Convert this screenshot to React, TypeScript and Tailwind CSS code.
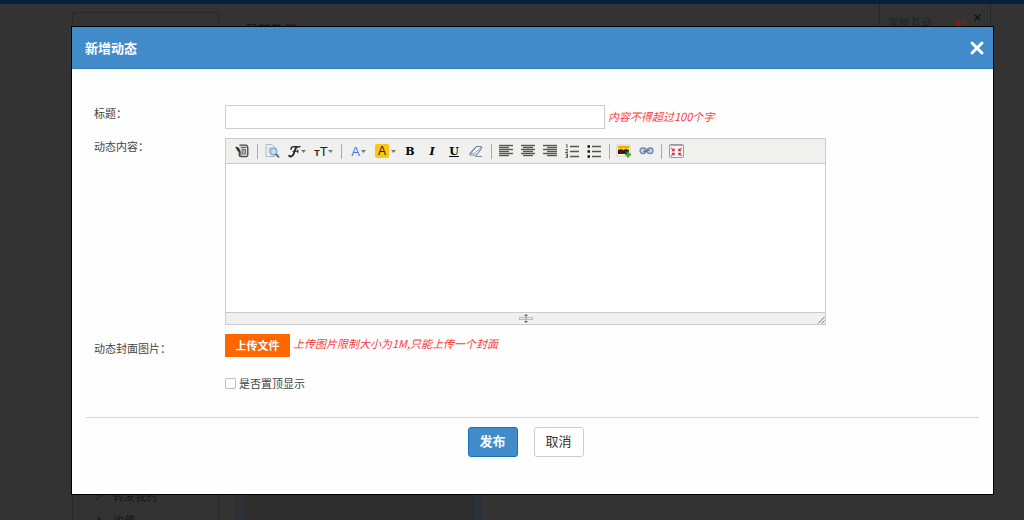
import React from 'react';

const Caret = () => (
  <svg width="5" height="3" viewBox="0 0 5 3" className="shrink-0" aria-hidden="true">
    <path d="M0 0h5L2.5 3z" fill="#777" />
  </svg>
);

const SourceIcon = () => (
  <svg width="14" height="14" viewBox="0 0 14 14" fill="none" aria-hidden="true">
    <path d="M4.5 1.200h7c1 .8 1.300 1.500 1.300 2.500v7c0 1-.6 1.800-1.500 2H6c-1 0-1.700-.7-1.800-1.500V8" fill="#d4d4d4" stroke="#444" strokeWidth="1.300" />
    <path d="M.8 3l2.700 1 2 4.500-2.500-1.500z" fill="#333" stroke="#222" strokeWidth=".8" />
    <path d="M5 9.500l1.500 2M6 3.500h5" stroke="#555" strokeWidth="1.200" />
    <path d="M7 5.500h3.500v4.500H7z" fill="#aaa" stroke="#666" strokeWidth=".8" />
  </svg>
);

const PreviewIcon = () => (
  <svg width="16" height="16" viewBox="0 0 16 16" fill="none" aria-hidden="true">
    <path d="M2 1.500h6l3 3v9H2z" fill="#edf0f4" stroke="#b3bac4" />
    <path d="M4 5h4M4 7h3M4 9h2" stroke="#c3cad3" />
    <circle cx="9.500" cy="8.500" r="3.300" fill="#c9dcf5" stroke="#7f9fce" strokeWidth="1.200" />
    <path d="M12 11l3 3.500" stroke="#555f6d" strokeWidth="1.800" />
  </svg>
);

const ScriptFIcon = () => (
  <svg width="13" height="13" viewBox="0 0 13 13" fill="none" stroke="#222" strokeLinecap="round" aria-hidden="true">
    <path d="M3 4.200C2.800 2 4.500 1.500 6.500 1.700c2 .2 4 .6 5.500-.2" strokeWidth="1.400" />
    <path d="M8.500 2C7 4 6.500 7.500 5.200 9.800 4.200 11.600 2.200 12 1.200 10.800" strokeWidth="1.800" />
    <path d="M5 6.200h4.500M9.800 5v2.400" strokeWidth="1.100" />
  </svg>
);

const EraserIcon = () => (
  <svg width="14" height="14" viewBox="0 0 14 14" fill="none" aria-hidden="true">
    <path d="M1 9.500L7.500 2.500h3.800c1.200 0 1.700 1 1 2L7.500 11H2.300C1.200 11 .6 10.200 1 9.500z" fill="#fff" stroke="#6a83ac" strokeWidth="1.200" />
    <path d="M1.500 9.200h4.200l6.500-6" stroke="#8aa0c4" />
    <path d="M6 12.500h7" stroke="#888" />
  </svg>
);

const lineSets = {
  left: ['M0 1.500h14', 'M0 3.500h10', 'M0 5.500h14', 'M0 7.500h10', 'M0 9.500h14', 'M0 11.500h10'],
  center: ['M0 1.500h14', 'M2 3.500h10', 'M0 5.500h14', 'M2 7.500h10', 'M0 9.500h14', 'M2 11.500h10'],
  right: ['M0 1.500h14', 'M4 3.500h10', 'M0 5.500h14', 'M4 7.500h10', 'M0 9.500h14', 'M4 11.500h10'],
};

const AlignIcon = ({ side }: { side: keyof typeof lineSets }) => (
  <svg width="14" height="14" viewBox="0 0 14 14" stroke="#555" strokeWidth="1.400" aria-hidden="true">
    {lineSets[side].map((d) => (
      <path key={d} d={d} />
    ))}
  </svg>
);

const OrderedIcon = () => (
  <svg width="14" height="14" viewBox="0 0 14 14" fill="none" stroke="#555" aria-hidden="true">
    <path d="M5 2.500h9M5 7.500h9M5 12.500h9" strokeWidth="1.400" />
    <path d="M1 1l1-.5V4M.5 5.500h2v1.500l-2 1.500h2.500M.5 10h2v3.500h-2M1 11.700h1.500" stroke="#333" strokeWidth=".8" />
  </svg>
);

const BulletIcon = () => (
  <svg width="14" height="14" viewBox="0 0 14 14" fill="none" aria-hidden="true">
    <path d="M5 2.500h9M5 7.500h9M5 12.500h9" stroke="#555" strokeWidth="1.400" />
    <path d="M.5 1.200h2.500v2.500H.5zM.5 6.200h2.500v2.500H.5zM.5 11.200h2.500v2.500H.5z" fill="#111" />
  </svg>
);

const ImageIcon = () => (
  <svg width="16" height="14" viewBox="0 0 16 14" aria-hidden="true">
    <path d="M1 1h13v11H1z" fill="#fff" stroke="#ccc" />
    <path d="M2 2h11v3H2z" fill="#f5a50c" />
    <path d="M2 4h11v2H2z" fill="#ffd02a" />
    <path d="M2 6l3-1 2 1 3-1 3 1v4H2z" fill="#3a220a" />
    <path d="M12 7.500v6M9 10.500h6" stroke="#2fa32f" strokeWidth="2.200" />
  </svg>
);

const LinkIcon = () => (
  <svg width="15" height="8" viewBox="0 0 15 8" fill="none" aria-hidden="true">
    <rect x="1" y="1" width="6" height="5.500" rx="2.700" fill="#c5d3e6" stroke="#7088ab" strokeWidth="1.300" />
    <rect x="8" y="1" width="6" height="5.500" rx="2.700" fill="#c5d3e6" stroke="#7088ab" strokeWidth="1.300" />
    <path d="M4.500 4.500l6-1.500" stroke="#5a7299" strokeWidth="1.500" />
  </svg>
);

const FullscreenIcon = () => (
  <svg width="15" height="14" viewBox="0 0 15 14" fill="none" aria-hidden="true">
    <rect x=".5" y=".5" width="14" height="13" rx="1" fill="#f8f6f6" stroke="#999" />
    <path d="M1 1.500h13" stroke="#aaa" />
    <path d="M2 4l3 2M13 4l-3 2M2 12l3-2.500M13 12l-3-2.500" stroke="#d85a5a" strokeWidth="1.200" />
    <path d="M5.500 4v3.300H2.500zM9.500 4v3.300H12.500zM5.500 12V8.700H2.500zM9.500 12V8.700H12.500z" fill="#c8102e" />
  </svg>
);

type Tool = { label: string; icon: React.ReactNode; menu?: boolean };

const toolGroups: Tool[][] = [
  [{ label: 'HTML代码', icon: <SourceIcon /> }],
  [
    { label: '预览', icon: <PreviewIcon /> },
    { label: '字体', menu: true, icon: <ScriptFIcon /> },
    {
      label: '文字大小',
      menu: true,
      icon: (
        <span className="font-['Liberation_Sans',sans-serif] text-[13px] text-[#222]">
          <span className="text-[9px] font-bold">T</span>T
        </span>
      ),
    },
  ],
  [
    { label: '文字颜色', menu: true, icon: <span className="mr-px font-['Liberation_Sans',sans-serif] text-[13px] text-[#3b7bf0]">A</span> },
    {
      label: '文字背景',
      menu: true,
      icon: (
        <span className="mr-0.5 flex h-[14px] w-[14px] items-center justify-center rounded-xs bg-[#fcc60e] font-['Liberation_Sans',sans-serif] text-xs text-[#222]">
          A
        </span>
      ),
    },
    { label: '粗体', icon: <b className="font-['DejaVu_Serif',serif] text-[11px] text-black">B</b> },
    { label: '斜体', icon: <b className="font-['DejaVu_Serif',serif] text-[11px] italic text-black">I</b> },
    { label: '下划线', icon: <b className="font-['DejaVu_Serif',serif] text-[11px] text-black underline">U</b> },
    { label: '删除格式', icon: <EraserIcon /> },
  ],
  [
    { label: '左对齐', icon: <AlignIcon side="left" /> },
    { label: '居中', icon: <AlignIcon side="center" /> },
    { label: '右对齐', icon: <AlignIcon side="right" /> },
    { label: '编号', icon: <OrderedIcon /> },
    { label: '项目符号', icon: <BulletIcon /> },
  ],
  [
    { label: '图片', icon: <ImageIcon /> },
    { label: '超级链接', icon: <LinkIcon /> },
  ],
  [{ label: '全屏显示', icon: <FullscreenIcon /> }],
];

function Editor() {
  return (
    <div className="w-[601px] max-w-full border border-[#ccc]">
      <div className="flex h-[25px] items-center border-b border-[#ccc] bg-[#f0f0ee] pl-[5px]" role="toolbar">
        {toolGroups.map((group, i) => (
          <React.Fragment key={group[0].label}>
            {i > 0 && (
              <span className="flex w-2 justify-center">
                <span className="h-[15px] w-px bg-[#aaa]" />
              </span>
            )}
            {group.map((tool) => (
              <button
                key={tool.label}
                type="button"
                aria-label={tool.label}
                className={`flex h-5 items-center justify-center leading-none ${tool.menu ? 'w-[27px]' : 'w-[22px]'}`}
              >
                {tool.icon}
                {tool.menu && <Caret />}
              </button>
            ))}
          </React.Fragment>
        ))}
      </div>
      <textarea id="content" className="block h-[148px] w-full resize-none bg-white p-1 outline-none" />
      <div className="grid h-3 grid-cols-[1fr_auto_1fr] items-center border-t border-[#ccc] bg-[#f0f0ee]">
        <svg width="14" height="9" viewBox="0 0 14 9" className="col-start-2" aria-hidden="true">
          <rect x=".5" y="3.500" width="13" height="2" fill="#eee" stroke="#bbb" />
          <path d="M7 0l2 2H5zM7 9l2-2H5z" fill="#666" />
          <path d="M7 2v5" stroke="#999" />
        </svg>
        <svg width="8" height="8" viewBox="0 0 8 8" className="self-end justify-self-end" stroke="#777" aria-hidden="true">
          <path d="M1 7.500L7.500 1M4.500 7.500L7.500 4.500" />
        </svg>
      </div>
    </div>
  );
}

function PageBehind() {
  return (
    <div className="flex h-screen flex-col overflow-hidden border-t-4 border-[#06203a] text-[11px] leading-4 text-[#15191d]">
      <div className="flex flex-1 pl-[72px] pr-[33px]">
        <div className="mt-2 flex w-[147px] flex-col justify-end border border-b-0 border-[#292929] pl-5">
          <div className="flex gap-2">
            <span className="w-3 text-center">↗</span>转发我的
          </div>
          <div className="-mb-2 mt-2 flex gap-2">
            <span className="w-3 text-center">★</span>收藏
          </div>
        </div>
        <div className="ml-2 flex w-[256px] flex-col justify-between pl-2">
          <h2 className="mt-[18px] pl-[10px] text-[13px] font-bold text-[#101820]">最新教学</h2>
          <div className="h-10 border-x-[9px] border-[#2b3134] bg-[#2d2d2d]" />
        </div>
        <div className="ml-auto flex h-10 w-[112px] items-start border-x border-[#202830] pl-2 pt-[10px]">
          <span className="text-[#1b242e]">家校互动</span>
          <span className="ml-[22px] text-[#8c1a1a]">43</span>
          <svg width="7" height="7" viewBox="0 0 7 7" className="ml-2" stroke="#141414" strokeWidth="1.200" aria-hidden="true">
            <path d="M.5 .5l6 6M6.500 .5l-6 6" />
          </svg>
        </div>
      </div>
    </div>
  );
}

export default function App() {
  return (
    <div className="relative min-h-screen bg-[#333] font-['Noto_Sans_CJK_SC',sans-serif]">
      <PageBehind />
      <div className="absolute inset-x-0 top-0 pb-6 pl-[71px] pr-[30px] pt-[26px]">
        <div role="dialog" aria-labelledby="dialog-title" className="border border-black bg-[#fefefe] text-[11px] leading-4 text-[#444]">
          <div className="flex h-[42px] items-center justify-between border-b border-[#357ebd] bg-[#428bca] pl-[13px] pr-2 text-white">
            <h1 id="dialog-title" className="text-[13px] font-bold">新增动态</h1>
            <button type="button" aria-label="关闭">
              <svg width="16" height="16" viewBox="0 0 16 16" stroke="#fff" strokeWidth="3" strokeLinecap="round" aria-hidden="true">
                <path d="M3 3l10 10M13 3L3 13" />
              </svg>
            </button>
          </div>

          <form className="px-[14px] pb-9 pt-9">
            <div className="grid grid-cols-[131px_1fr] gap-y-[9px] px-2">
              <label htmlFor="title">标题：</label>
              <div className="flex items-start gap-[3px]">
                <input id="title" type="text" className="h-6 w-[380px] border border-[#ccc] bg-white px-1 outline-none" />
                <em className="pt-[3px] text-[#fb3b3b]">内容不得超过100个字</em>
              </div>

              <label htmlFor="content">动态内容：</label>
              <Editor />

              <label htmlFor="cover" className="pt-1.5">动态封面图片：</label>
              <div className="flex items-start gap-[3px]">
                <button id="cover" type="button" className="h-[23px] w-[65px] bg-[#ff6600] pb-0.5 font-bold text-white">上传文件</button>
                <em className="pt-px text-[#fb3b3b]">上传图片限制大小为1M,只能上传一个封面</em>
              </div>

              <label className="col-start-2 mt-[9px] flex items-center gap-[3px]">
                <input type="checkbox" className="h-[11px] w-[11px] appearance-none rounded-xs border border-[#bbb] bg-white checked:bg-[#428bca]" />
                是否置顶显示
              </label>
            </div>

            <div className="mt-[26px] flex justify-center gap-4 border-t border-[#d5d5d5] pb-px pr-[14px] pt-[9px] text-[13px]">
              <button type="submit" className="h-[30px] w-[50px] rounded-[3px] border border-[#1472b8] bg-[#428bca] pb-0.5 font-bold text-white">发布</button>
              <button type="button" className="h-[30px] w-[50px] rounded-[3px] border border-[#ccc] bg-white pb-0.5 text-[#333]">取消</button>
            </div>
          </form>
        </div>
      </div>
    </div>
  );
}
